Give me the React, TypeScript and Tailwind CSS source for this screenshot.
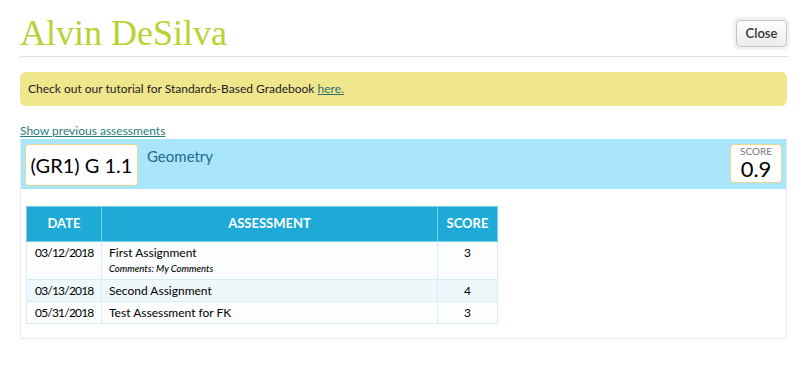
import React from "react";

interface Assessment {
  date: string;
  title: string;
  comments?: string;
  score: number;
}

const assessments: Assessment[] = [
  { date: "03/12/2018", title: "First Assignment", comments: "My Comments", score: 3 },
  { date: "03/13/2018", title: "Second Assignment", score: 4 },
  { date: "05/31/2018", title: "Test Assessment for FK", score: 3 },
];

const sans = { fontFamily: "Lato, 'Noto Sans', sans-serif" };

export default function App() {
  return (
    <div className="w-[809px] h-[368px] bg-white px-[20px] pt-[14px] text-black" style={sans}>
      {/* Header */}
      <div className="flex items-start justify-between h-[43px] border-b border-dotted border-[#c8c8c8] mr-[2px]">
        <h1
          className="text-[36px] leading-[38px] text-[#b7d333]"
          style={{ fontFamily: "'Liberation Serif', serif" }}
        >
          Alvin DeSilva
        </h1>
        <button className="mt-[6px] h-[27px] w-[51px] rounded-[4px] border border-[#c4c4c4] bg-gradient-to-b from-white to-[#ececec] text-[13px] font-semibold text-[#333] shadow-[0_0_0_3px_#f2f2f2]">
          Close
        </button>
      </div>

      {/* Tutorial banner */}
      <div className="mt-[15px] h-[34px] mr-[2px] rounded-[6px] bg-[#f0e68c] flex items-center pl-[8px] text-[12px] text-[#222]">
        Check out our tutorial for Standards-Based Gradebook&nbsp;
        <a href="#" className="text-[#2a6f73] underline">here.</a>
      </div>

      <a href="#" className="block mt-[17px] text-[12px] leading-[16px] text-[#2a7b7b] underline">
        Show previous assessments
      </a>

      {/* Standard panel */}
      <div className="w-[767px] h-[200px] border-x border-b border-[#ececec]">
        <div className="h-[50px] bg-[#a9e5fb] flex items-start justify-between pl-[4px] pr-[4px] pt-[5px]">
          <div className="flex items-start">
            <div className="h-[42px] w-[113px] rounded-[4px] border border-[#e8d68a] bg-white flex items-center justify-center text-[20px] text-black">
              (GR1) G 1.1
            </div>
            <div className="ml-[9px] mt-[1px] text-[15px] text-[#236b8e]">Geometry</div>
          </div>
          <div className="h-[39px] w-[52px] rounded-[4px] border border-[#e8d68a] bg-white flex flex-col items-center pt-[1px]">
            <div className="text-[10px] leading-[10px] h-[10px] text-[#777]">SCORE</div>
            <div className="text-[22px] leading-[26px] h-[26px] text-black">0.9</div>
          </div>
        </div>

        <div className="pt-[17px] pl-[5px]">
          <table className="border-collapse table-fixed w-[471px] text-[12px]">
            <colgroup>
              <col className="w-[75px]" />
              <col className="w-[336px]" />
              <col className="w-[60px]" />
            </colgroup>
            <thead>
              <tr className="bg-[#1eaad6] text-white text-[13px] font-bold h-[35px]">
                <th className="border border-[#7ccde9] font-bold">DATE</th>
                <th className="border border-[#7ccde9] font-bold">ASSESSMENT</th>
                <th className="border border-[#7ccde9] font-bold">SCORE</th>
              </tr>
            </thead>
            <tbody>
              {assessments.map((a, idx) => (
                <tr key={a.date} className={idx % 2 === 1 ? "bg-[#eef7fa]" : "bg-[#fbfdfe]"}>
                  <td className="border border-[#d5edf7] pl-[8px] pr-[4px] align-top pt-[3px] pb-[3px] leading-[15px] tracking-[-0.8px]">{a.date}</td>
                  <td className="border border-[#d5edf7] px-[7px] align-top pt-[3px] pb-[3px] leading-[15px]">
                    <div>{a.title}</div>
                    {a.comments && (
                      <div className="text-[9.5px] leading-[10px] italic font-medium mt-[4px] mb-[2px]">Comments: {a.comments}</div>
                    )}
                  </td>
                  <td className="border border-[#d5edf7] text-center align-top pt-[3px] pb-[3px] leading-[15px]">{a.score}</td>
                </tr>
              ))}
            </tbody>
          </table>
        </div>
      </div>
    </div>
  );
}
